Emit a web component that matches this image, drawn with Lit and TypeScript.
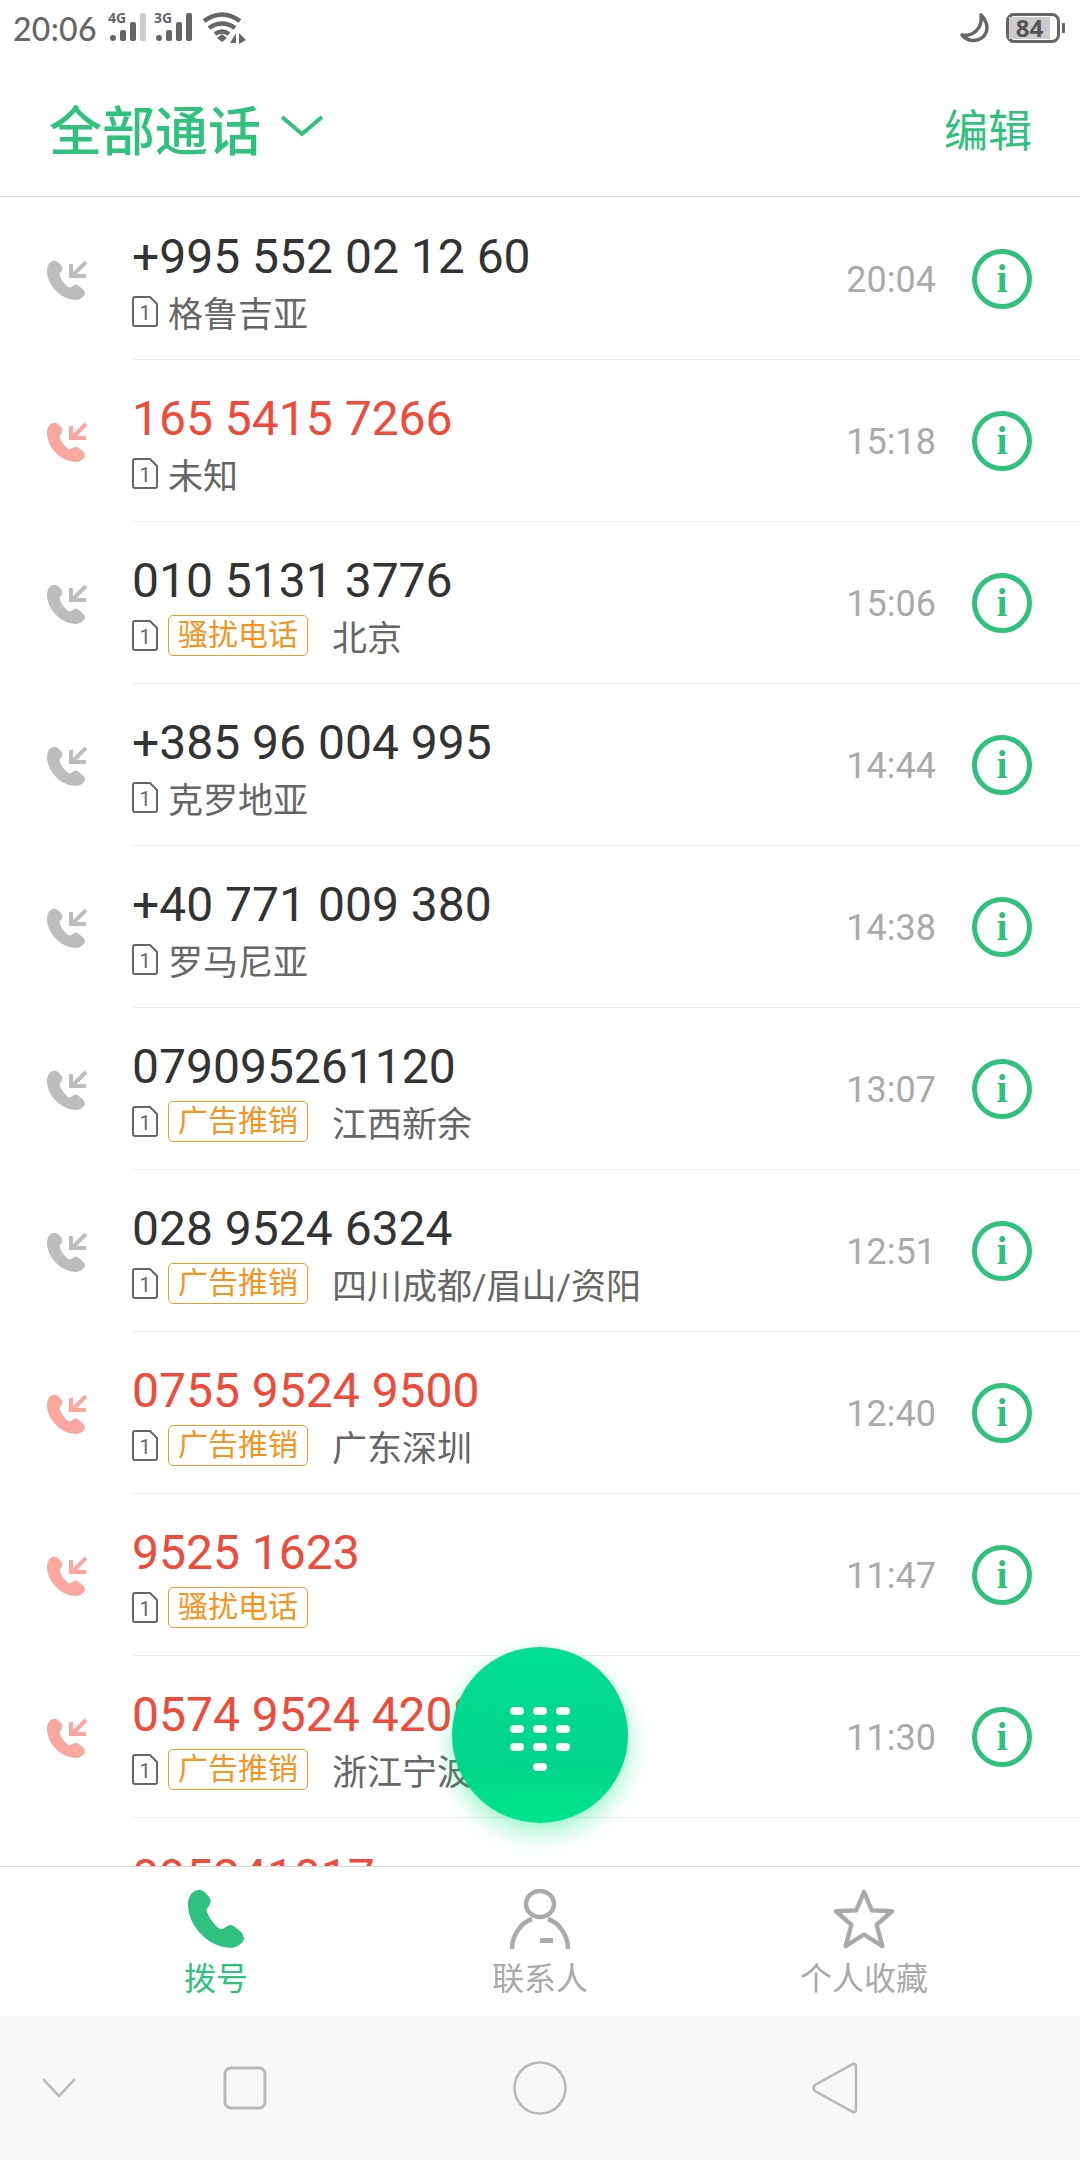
import { LitElement, html, css, svg } from 'lit'
import { customElement } from 'lit/decorators.js'

type Call = { num: string; time?: string; missed?: boolean; tag?: string; place?: string }

const calls: Call[] = [
  { num: '+995 552 02 12 60', place: '格鲁吉亚', time: '20:04' },
  { num: '165 5415 7266', place: '未知', time: '15:18', missed: true },
  { num: '010 5131 3776', tag: '骚扰电话', place: '北京', time: '15:06' },
  { num: '+385 96 004 995', place: '克罗地亚', time: '14:44' },
  { num: '+40 771 009 380', place: '罗马尼亚', time: '14:38' },
  { num: '079095261120', tag: '广告推销', place: '江西新余', time: '13:07' },
  { num: '028 9524 6324', tag: '广告推销', place: '四川成都/眉山/资阳', time: '12:51' },
  { num: '0755 9524 9500', tag: '广告推销', place: '广东深圳', time: '12:40', missed: true },
  { num: '9525 1623', tag: '骚扰电话', time: '11:47', missed: true },
  { num: '0574 9524 4208', tag: '广告推销', place: '浙江宁波', time: '11:30', missed: true },
  // only the top of this number shows above the tab bar
  { num: '095241017', missed: true },
]

// handset drawn in a 38x39 box
const handset = 'M6 0 C2 1 0 5 0 10 C0 24 14 39 29 39 C33 39 37 36 38 33 C38 30 36 28 33 26 C31 24 29 23 27 24 L24 26 C22 27 21 26 19 24 C16 21 14 18 13 15 C12 13 13 12 14 11 L15 9 C16 7 15 5 13 3 C11 1 9 -1 6 0 Z'

@customElement('app-root')
export class AppRoot extends LitElement {
  static styles = css`
    :host {
      display: block;
      font-family: Roboto, "Noto Sans CJK SC", sans-serif;
    }

    .page {
      position: relative;
      height: 2160px;
      display: flex;
      flex-direction: column;
      background: #fff;
      overflow: hidden;
    }

    .status {
      height: 60px;
      flex: none;
      box-sizing: border-box;
      display: flex;
      align-items: center;
      padding: 0 15px 4px 13px;
      color: #666;
      font-size: 32px;
      font-weight: 500;
      font-family: Lato, "Noto Sans", sans-serif;
    }

    .status .time { margin-right: 11px; letter-spacing: 0.3px; }
    .status svg { display: block; flex: none; }
    .status .sig { margin-right: 8px; margin-top: -6px; }
    .status .wifi { margin-left: 2px; }
    .status .right { margin-left: auto; display: flex; align-items: center; gap: 13px; }

    .batt {
      position: relative;
      width: 54px;
      height: 30px;
      box-sizing: border-box;
      border: 3px solid #666;
      border-radius: 8px;
      margin-right: 5px;
      padding: 1px 0;
      display: flex;
    }

    .batt b {
      flex: 1;
      background: #ccc;
      color: #555;
      font: 700 24px/22px "Open Sans", sans-serif;
      text-align: center;
      margin-right: 7px;
    }

    .batt::after {
      content: '';
      position: absolute;
      right: -8px;
      top: 7px;
      width: 3px;
      height: 10px;
      background: #666;
      border-radius: 1px;
    }

    .head {
      height: 136px;
      flex: none;
      display: flex;
      align-items: center;
      padding: 0 48px 0 49px;
      border-bottom: 1px solid #d9d9d9;
      color: #2ec27e;
    }

    .head h1 {
      margin: 0;
      font-size: 53px;
      font-weight: 500;
      font-family: "Noto Sans CJK SC", sans-serif;
      line-height: 1;
    }

    .head svg { margin-left: 19px; margin-top: -4px; }

    .head .edit {
      margin-left: auto;
      font-size: 44px;
      font-family: "Noto Sans CJK SC", sans-serif;
    }

    .list { flex: 1; min-height: 0; overflow: hidden; padding-top: 1px; }

    .row { display: flex; height: 162px; }

    .kind {
      width: 132px;
      flex: none;
      padding: 61px 0 0 47px;
      box-sizing: border-box;
    }

    .kind svg { display: block; }

    .body {
      flex: 1;
      display: flex;
      align-items: center;
      border-bottom: 1px solid #ececec;
      padding-right: 48px;
      min-width: 0;
    }

    .text { flex: 1; min-width: 0; margin-top: 10px; }

    .num {
      font-size: 48px;
      line-height: 56px;
      color: #333;
      margin-top: -4px;
      white-space: nowrap;
    }

    .missed .num { color: #f04a3a; }

    .sub {
      display: flex;
      align-items: center;
      height: 46px;
      margin-top: 4px;
      font-size: 35px;
      color: #666;
    }

    .sim { display: block; flex: none; margin-right: 10px; }

    .tag {
      box-sizing: border-box;
      height: 41px;
      width: 140px;
      margin-right: 24px;
      border: 1px solid #f7982a;
      border-radius: 5px;
      color: #f7941d;
      font-size: 30px;
      line-height: 38px;
      text-align: center;
      white-space: nowrap;
    }

    .clock {
      font-size: 36px;
      color: #aaa;
      margin-right: 36px;
      margin-top: 2px;
    }

    .info {
      box-sizing: border-box;
      width: 60px;
      height: 60px;
      flex: none;
      border: 5px solid #2ec27e;
      border-radius: 50%;
      display: flex;
      align-items: center;
      justify-content: center;
      color: #2ec27e;
      font: 700 40px/1 "Liberation Serif", serif;
    }

    .fab {
      position: absolute;
      left: 452px;
      top: 1647px;
      width: 176px;
      height: 176px;
      border-radius: 50%;
      background: linear-gradient(180deg, #00df93, #00d58b 65%, #00e48c);
      box-shadow: 0 10px 24px rgba(0, 230, 130, 0.4);
      display: flex;
      align-items: center;
      justify-content: center;
    }

    .fab svg { margin-top: 8px; }

    .tabs {
      height: 149px;
      flex: none;
      display: grid;
      grid-template-columns: repeat(3, 1fr);
      padding: 0 54px;
      background: #fff;
      border-top: 1px solid #d6d6d6;
      position: relative;
    }

    .tab {
      display: flex;
      flex-direction: column;
      align-items: center;
      padding-top: 22px;
      color: #aaa;
      font-size: 32px;
    }

    .tab.on { color: #2ec27e; }
    .tab svg { display: block; }
    .tab span { line-height: 40px; margin-top: 10px; }

    .nav {
      height: 144px;
      flex: none;
      background: #f8f8f8;
      position: relative;
      display: grid;
      grid-template-columns: repeat(3, 295px);
      justify-content: center;
      justify-items: center;
      align-items: center;
    }

    .nav svg { display: block; }
    .nav .hide { position: absolute; left: 42px; top: 62px; }
  `

  private callIcon(missed?: boolean) {
    const c = missed ? '#f9a79f' : '#bdbdbd'
    return html`<svg width="42" height="42" viewBox="0 0 42 42">
      <path d="${handset}" transform="translate(0,2)" fill="${c}"/>
      <path d="M39 3 L25 17 M24 5 V17 H39" fill="none" stroke="${c}" stroke-width="4"/>
    </svg>`
  }

  private simIcon() {
    return html`<svg class="sim" width="26" height="31" viewBox="0 0 26 31">
      <path d="M3 1 H18 L25 8 V28 Q25 30 23 30 H3 Q1 30 1 28 V3 Q1 1 3 1 Z" fill="none" stroke="#666" stroke-width="2"/>
      <text x="13" y="24" font-size="20" text-anchor="middle" fill="#666" font-family="Roboto">1</text>
    </svg>`
  }

  private row(c: Call) {
    return html`<div class="row ${c.missed ? 'missed' : ''}">
      <div class="kind">${this.callIcon(c.missed)}</div>
      <div class="body">
        <div class="text">
          <div class="num">${c.num}</div>
          <div class="sub">
            ${c.time ? this.simIcon() : ''}
            ${c.tag ? html`<span class="tag">${c.tag}</span>` : ''}
            ${c.place ? html`<span>${c.place}</span>` : ''}
          </div>
        </div>
        ${c.time
          ? html`<div class="clock">${c.time}</div>
              <div class="info">i</div>`
          : ''}
      </div>
    </div>`
  }

  private signal(label: string, dim: boolean) {
    return html`<svg class="sig" width="38" height="36" viewBox="0 -6 38 36">
      <text x="0" y="10" font-size="14" font-weight="700" fill="#666" font-family="Open Sans">${label}</text>
      <rect x="2" y="22" width="6" height="6" rx="3" fill="#666"/>
      <rect x="12" y="17" width="6" height="11" rx="2" fill="#666"/>
      <rect x="22" y="9" width="6" height="19" rx="2" fill="#666"/>
      <rect x="32" y="0" width="6" height="28" rx="2" fill="${dim ? '#ccc' : '#666'}"/>
    </svg>`
  }

  private dialDots() {
    const dots = []
    for (const y of [0, 18, 36]) {
      for (const x of [0, 23, 46]) {
        dots.push(svg`<rect x="${x}" y="${y}" width="14" height="8" rx="4" fill="#fff"/>`)
      }
    }
    dots.push(svg`<rect x="23" y="56" width="14" height="8" rx="4" fill="#fff"/>`)
    return html`<svg width="60" height="64" viewBox="0 0 60 64">${dots}</svg>`
  }

  render() {
    return html`<div class="page">
      <div class="status">
        <span class="time">20:06</span>
        ${this.signal('4G', true)}
        ${this.signal('3G', false)}
        <svg class="wifi" width="44" height="32" viewBox="0 0 44 32">
          <path d="M2 9 Q20 -4 38 9 M7 16 Q20 7 33 16 M13 22 Q20 17 27 22" fill="none" stroke="#666" stroke-width="4.5"/>
          <path d="M15 26 L20 22 L25 26 L20 30 Z" fill="#666"/>
          <path d="M34 21 V31 H28 Z M37 21 L44 28 L37 32 Z" fill="#666"/>
        </svg>
        <div class="right">
          <svg width="33" height="30" viewBox="0 0 33 30">
            <path d="M21 2 C28 9 29 18 23 24 C17 29 8 29 2 22 C12 24 23 16 21 2 Z" fill="none" stroke="#666" stroke-width="3.5" stroke-linejoin="round"/>
          </svg>
          <div class="batt"><b>84</b></div>
        </div>
      </div>

      <div class="head">
        <h1>全部通话</h1>
        <svg width="44" height="24" viewBox="0 0 44 24">
          <path d="M2 3 L22 20 L42 3" fill="none" stroke="#2ec27e" stroke-width="4"/>
        </svg>
        <span class="edit">编辑</span>
      </div>

      <div class="list">${calls.map((c) => this.row(c))}</div>

      <div class="tabs">
        <div class="tab on">
          <svg width="56" height="60" viewBox="0 0 38 39"><path d="${handset}" fill="#2ec27e"/></svg>
          <span>拨号</span>
        </div>
        <div class="tab">
          <svg width="62" height="60" viewBox="0 0 62 60">
            <ellipse cx="31" cy="15" rx="14" ry="13" fill="none" stroke="#aaa" stroke-width="4.5"/>
            <path d="M3 60 C3 44 14 33 23 30 M59 60 C59 44 48 33 39 30" fill="none" stroke="#aaa" stroke-width="4.5"/>
            <rect x="31" y="49" width="13" height="5" fill="#aaa"/>
          </svg>
          <span>联系人</span>
        </div>
        <div class="tab">
          <svg width="64" height="60" viewBox="0 0 64 62">
            <path d="M32 3 L40 22 L61 23 L45 37 L51 59 L32 47 L13 59 L19 37 L3 23 L24 22 Z" fill="none" stroke="#aaa" stroke-width="4.5" stroke-linejoin="round"/>
          </svg>
          <span>个人收藏</span>
        </div>
      </div>

      <div class="nav">
        <svg class="hide" width="34" height="20" viewBox="0 0 34 20"><path d="M1 1 L17 18 L33 1" fill="none" stroke="#b8b8b8" stroke-width="2.5"/></svg>
        <svg width="44" height="44" viewBox="0 0 44 44"><rect x="2" y="2" width="40" height="40" rx="6" fill="none" stroke="#b8b8b8" stroke-width="3"/></svg>
        <svg width="54" height="54" viewBox="0 0 54 54"><circle cx="27" cy="27" r="25.5" fill="none" stroke="#b8b8b8" stroke-width="2.5"/></svg>
        <svg width="46" height="52" viewBox="0 0 46 52"><path d="M41 2 Q44 1 44 5 V47 Q44 51 41 50 L3 29 Q0 26 3 23 Z" fill="none" stroke="#b8b8b8" stroke-width="2.5"/></svg>
      </div>

      <div class="fab">${this.dialDots()}</div>
    </div>`
  }
}

declare global {
  interface HTMLElementTagNameMap {
    'app-root': AppRoot
  }
}
